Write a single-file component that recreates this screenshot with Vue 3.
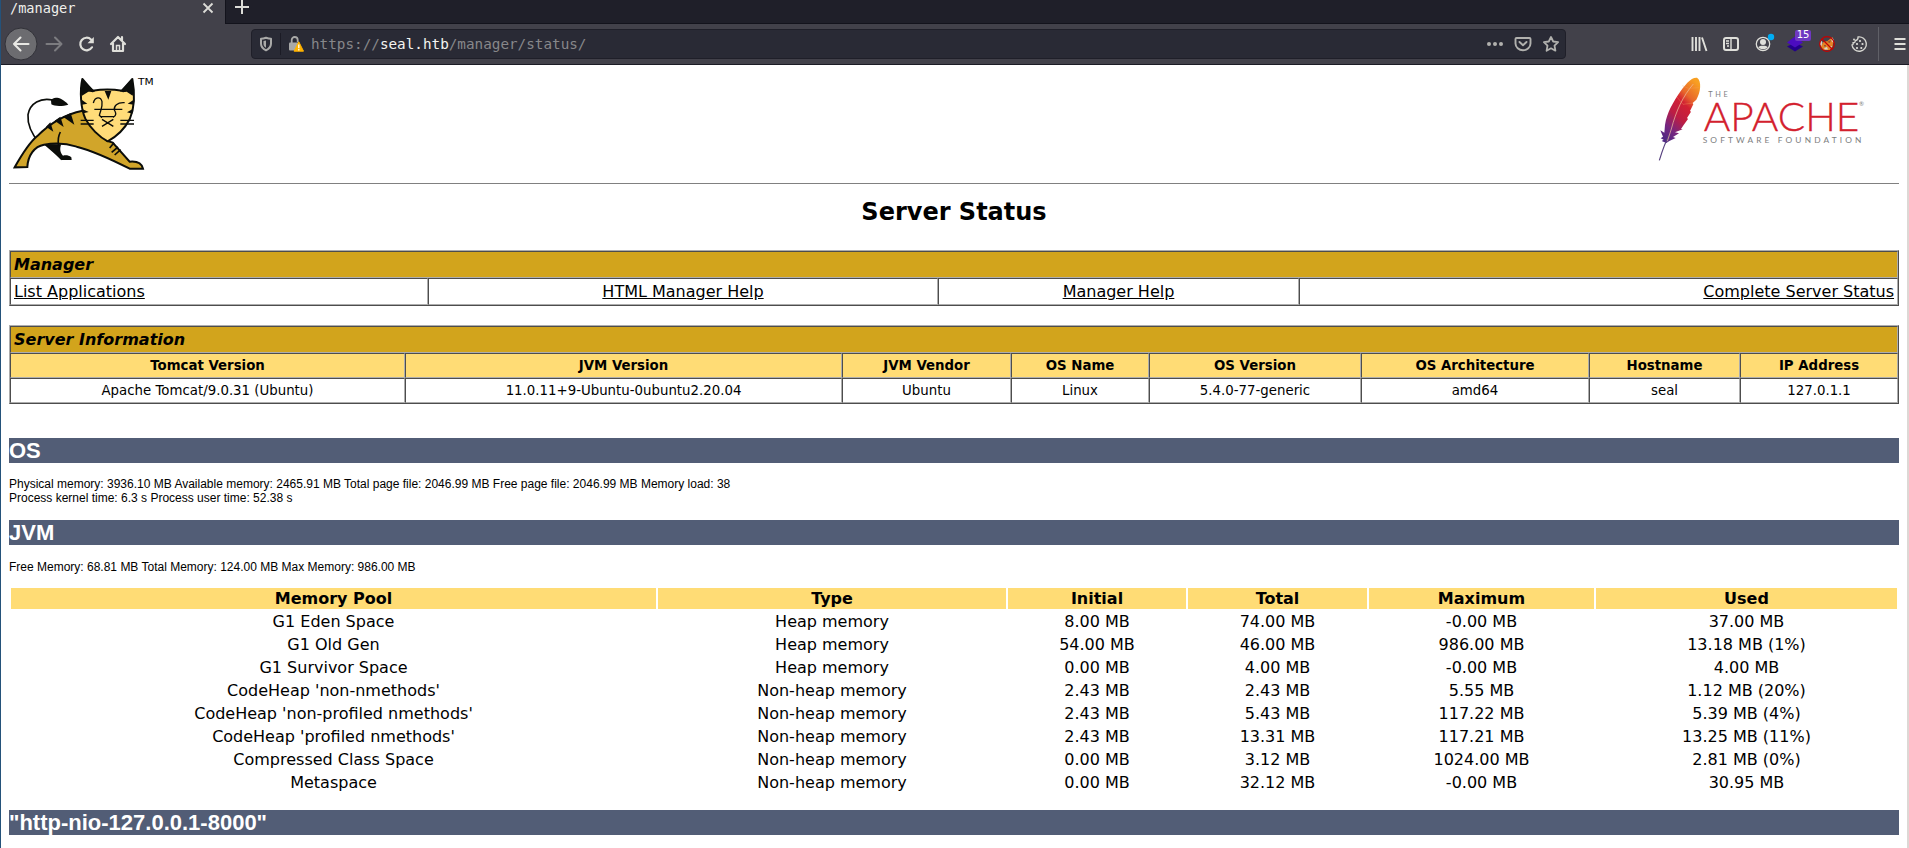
<script setup>
const info = [
  ['Tomcat Version', 'Apache Tomcat/9.0.31 (Ubuntu)'],
  ['JVM Version', '11.0.11+9-Ubuntu-0ubuntu2.20.04'],
  ['JVM Vendor', 'Ubuntu'],
  ['OS Name', 'Linux'],
  ['OS Version', '5.4.0-77-generic'],
  ['OS Architecture', 'amd64'],
  ['Hostname', 'seal'],
  ['IP Address', '127.0.1.1'],
]
const poolHeads = ['Memory Pool', 'Type', 'Initial', 'Total', 'Maximum', 'Used']
const pools = [
  ['G1 Eden Space', 'Heap memory', '8.00 MB', '74.00 MB', '-0.00 MB', '37.00 MB'],
  ['G1 Old Gen', 'Heap memory', '54.00 MB', '46.00 MB', '986.00 MB', '13.18 MB (1%)'],
  ['G1 Survivor Space', 'Heap memory', '0.00 MB', '4.00 MB', '-0.00 MB', '4.00 MB'],
  ["CodeHeap 'non-nmethods'", 'Non-heap memory', '2.43 MB', '2.43 MB', '5.55 MB', '1.12 MB (20%)'],
  ["CodeHeap 'non-profiled nmethods'", 'Non-heap memory', '2.43 MB', '5.43 MB', '117.22 MB', '5.39 MB (4%)'],
  ["CodeHeap 'profiled nmethods'", 'Non-heap memory', '2.43 MB', '13.31 MB', '117.21 MB', '13.25 MB (11%)'],
  ['Compressed Class Space', 'Non-heap memory', '0.00 MB', '3.12 MB', '1024.00 MB', '2.81 MB (0%)'],
  ['Metaspace', 'Non-heap memory', '0.00 MB', '32.12 MB', '-0.00 MB', '30.95 MB'],
]
</script>

<template>
  <div class="window">
    <div class="tabs">
      <div class="tab">
        <span class="tab-title">/manager</span>
        <svg class="close" width="12" height="12" viewBox="0 0 12 12"><path d="M1.5 1.5l9 9m0-9l-9 9" stroke="#dcdcd8" stroke-width="1.8" fill="none" /></svg>
      </div>
      <svg class="plus" width="16" height="16" viewBox="0 0 16 16"><path d="M8 1v14M1 8h14" stroke="#dcdcd8" stroke-width="2" fill="none" /></svg>
    </div>
    <div class="toolbar">
      <div class="nav">
        <svg width="34" height="34" viewBox="0 0 34 34"><circle cx="17" cy="17" r="16" fill="#6c6c70" stroke="#313138" /><path d="M24.500 17H10M16.500 10.500L10 17l6.500 6.500" stroke="#e8e8e4" stroke-width="2.100" fill="none" stroke-linecap="round" stroke-linejoin="round" /></svg>
        <svg width="32" height="34" viewBox="0 0 32 34"><path d="M8.500 17H23M17 10.500l6.500 6.500-6.500 6.500" stroke="#7c7c80" stroke-width="2" fill="none" stroke-linecap="round" stroke-linejoin="round" /></svg>
        <svg width="32" height="34" viewBox="0 0 32 34"><path d="M22 20.300A6.300 6.300 0 1 1 21 12.500" stroke="#dfdfda" stroke-width="2.200" fill="none" stroke-linecap="round" /><path d="M23.800 10v6.300h-6.300z" fill="#dfdfda" /></svg>
        <svg width="32" height="34" viewBox="0 0 32 34"><path d="M9 17l7-7 7 7M11 16v8h10v-8M20 10v4" stroke="#dfdfda" stroke-width="2.200" fill="none" stroke-linecap="round" stroke-linejoin="round" /><path d="M14.500 24v-5.500h3V24" fill="none" stroke="#dfdfda" stroke-width="1.500" /></svg>
      </div>
      <div class="urlbar">
        <svg class="shield" width="14" height="16" viewBox="0 0 14 16"><path d="M7 1.700c2 .7 3.500 1 5 1v5.100c0 3-2 5-5 6.500-3-1.500-5-3.500-5-6.500V2.700c1.500 0 3-.3 5-1z" fill="none" stroke="#a9a9a8" stroke-width="2" stroke-linejoin="round" /><path d="M7 4.500v7.200c-1.800-1-2.500-2.200-2.500-4V5z" fill="#a9a9a8" /></svg>
        <span class="url-sep"></span>
        <svg class="lock" width="16" height="16" viewBox="0 0 16 16"><path d="M3.700 7V4a3 3 0 0 1 6 0V6" stroke="#a9a9a8" stroke-width="1.800" fill="none" /><rect x="1" y="6.500" width="10.500" height="8" rx="1" fill="#a9a9a8" /><path d="M10.800 5.800l4.700 9.400H6.100z" fill="#ffb300" stroke="#ffb300" stroke-width="1" stroke-linejoin="round" /><path d="M10.800 8.600v3.600M10.800 13.100v1.300" stroke="#fff" stroke-width="1.300" /></svg>
        <span class="url">https://<b>seal.htb</b>/manager/status/</span>
        <div class="url-actions">
          <svg width="28" height="20" viewBox="0 0 28 20"><g fill="#b1b1ae"><circle cx="8" cy="10" r="2" /><circle cx="14" cy="10" r="2" /><circle cx="20" cy="10" r="2" /></g></svg>
          <svg width="28" height="20" viewBox="0 0 28 20"><path d="M7.500 4h13a1 1 0 0 1 1 1v4.500a7.500 6.800 0 0 1-15 0V5a1 1 0 0 1 1-1z" fill="none" stroke="#b1b1ae" stroke-width="1.900" /><path d="M10.500 8l3.500 3.300L17.500 8" fill="none" stroke="#b1b1ae" stroke-width="1.900" stroke-linecap="round" stroke-linejoin="round" /></svg>
          <svg width="28" height="20" viewBox="0 0 28 20"><path d="M14 3l2.200 4.500 4.900.7-3.600 3.500.9 5L14 14.300l-4.400 2.400.9-5L6.900 8.200l4.900-.7z" fill="none" stroke="#b1b1ae" stroke-width="1.800" stroke-linejoin="round" /></svg>
        </div>
      </div>
      <div class="extensions">
        <svg width="32" height="20" viewBox="0 0 32 20"><path d="M9.500 3v14M13 3v14M16.500 3v14M19 3.500l4.500 13.500" stroke="#dfdfda" stroke-width="1.900" fill="none" /></svg>
        <svg width="32" height="20" viewBox="0 0 32 20"><rect x="9" y="4" width="14" height="12" rx="2" fill="none" stroke="#dfdfda" stroke-width="2" /><path d="M16 4v12M11 7h3M11 9.500h3M12 12h2" stroke="#dfdfda" stroke-width="1.400" /></svg>
        <svg width="32" height="24" viewBox="0 0 32 24"><circle cx="16" cy="12" r="6.700" fill="none" stroke="#dfdfda" stroke-width="1.300" /><circle cx="16" cy="10" r="3" fill="#dfdfda" /><path d="M11.300 15.300c1-1.300 2.500-1.500 4.700-1.500s3.700.2 4.700 1.500c-2.300 2.700-7 2.700-9.400 0z" fill="#dfdfda" /><circle cx="24" cy="5" r="3.200" fill="#00adf4" /></svg>
        <div class="layers">
          <svg width="32" height="24" viewBox="0 0 32 24"><path d="M8 14.500l8-4 8 4-8 5z" fill="#24008b" /><path d="M8 10.500l8-6 8 6-8 5z" fill="#4b0cc0" /></svg>
          <span class="badge">15</span>
        </div>
        <svg width="32" height="20" viewBox="0 0 32 20"><path d="M9.500 12l3-4 4-1 5-4 .8 5-.8 5-3 3h-6z" fill="#e78325" /><path d="M9 6l2.500 2-1 4-1.500-1zM21 4l1.500 1v4l-2-2zM13 14l3-1 1 2.500h-3zM19 12l2 0-1 2z" fill="#d8d3cb" /><path d="M16 8l4-2-1 3zM13 11h2v1.500h-2z" fill="#8f5638" /><circle cx="16" cy="10" r="7.300" fill="none" stroke="#c40000" stroke-width="1.200" /><path d="M11 5l10.500 10.500" stroke="#c40000" stroke-width="1.200" /></svg>
        <svg width="32" height="20" viewBox="0 0 32 20"><path d="M15 3A7.200 7.200 0 1 1 9 11c1-.3 1.500-1 1-2.300 1.600.2 2.500-.7 2.200-2.200C14 6.500 15.300 5 15 3z" fill="none" stroke="#d5d5d0" stroke-width="1.400" stroke-linejoin="round" /><circle cx="11" cy="5.500" r="1" fill="#d5d5d0" /><g fill="#dfdfda"><circle cx="17" cy="7" r="1.100" /><circle cx="14" cy="10" r="1.100" /><circle cx="19.500" cy="10" r="1.100" /><circle cx="14" cy="14" r="1.100" /><circle cx="18.300" cy="14" r="1.100" /></g></svg>
      </div>
      <span class="menu-sep"></span>
      <svg class="menu" width="14" height="14" viewBox="0 0 14 14"><path d="M1.500 2h11M1.500 7h11M1.500 12h11" stroke="#dfdfda" stroke-width="2" /></svg>
    </div>

    <div class="page">
      <div class="logos">
        <svg class="tomcat" width="150" height="105" viewBox="27 29 450 315">
          <path d="M107 229L139 249L186 298" fill="none" stroke="#0b0d0a" stroke-width="6" />
          <path d="M119 250C93 219 82 188 84 163C90 128 122 111 158 119" fill="none" stroke="#0b0d0a" stroke-width="5" />
          <path d="M153 120C160 109 181 108 205 133C190 138 164 139 154 132z" fill="#0b0d0a" />
          <path d="M44 321C66 282 86 249 111 228C148 190 190 163 248 151L322 242L338 247L389 304C410 302 425 308 429 325H389C338 299 288 274 230 259C199 249 164 247 132 253C103 258 84 285 82 320z" fill="#d1a52a" stroke="#0b0d0a" stroke-width="6" stroke-linejoin="miter" />
          <path d="M130 251L186 299H215L214 291C206 285 198 284 189 286C181 278 178 265 184 252z" fill="#0b0d0a" />
          <path d="M181 215C174 229 173 241 176 254" fill="none" stroke="#0b0d0a" stroke-width="5" />
          <path d="M138 199L160 214L151 186zM164 181L191 200L181 169zM189 169L223 193L212 158z" fill="#0b0d0a" />
          <path d="M342 247L329 263M354 260L335 276M362 268L344 284" stroke="#0b0d0a" stroke-width="5" />
          <path d="M247 56L277 91Q323 84 366 91L397 56C405 99 403 145 389 177C371 211 346 231 323 243C298 230 270 203 256 175C242 145 239 91 247 56z" fill="#ffdc79" stroke="#0b0d0a" stroke-width="6" stroke-linejoin="round" />
          <path d="M247 56L285 93C277 97 283 95 265 94L246 106C238 95 243 79 247 56zM397 56L360 93C372 97 366 95 380 94L398 106C403 92 402 76 397 56zM314 92H334L325 118zM246 119L262 130L245 133zM399 120L383 130L401 133zM248 147L266 155L250 159zM398 146L381 156L397 160z" fill="#0b0d0a" />
          <path d="M280 128C285 109 302 108 306 124C308 143 302 148 298 165L306 172M283 147H367M374 127C351 125 341 138 343 149C348 157 351 165 339 171M302 169H340M306 177L340 198M340 177L306 198M242 180H281M242 191H281M361 180H402M361 191H402" fill="none" stroke="#0b0d0a" stroke-width="4" />
          <text x="414" y="75" font-size="27" textLength="47" lengthAdjust="spacingAndGlyphs">TM</text>
        </svg>
        <svg class="apache" width="220" height="90" viewBox="60 45 660 270">
          <defs><linearGradient id="feather" x1=".8" y1="0" x2=".2" y2="1"><stop offset="0" stop-color="#f8a022" /><stop offset=".25" stop-color="#e8672b" /><stop offset=".38" stop-color="#d22033" /><stop offset=".6" stop-color="#bd1d43" /><stop offset=".82" stop-color="#762780" /><stop offset="1" stop-color="#502784" /></linearGradient></defs>
          <path d="M201 53C216 63 212 97 199 119L188 129L190 133L180 153L183 155L171 174L174 177L161 195L153 207L158 208L135 217L147 220L129 231L137 234L118 243L109 249L95 243L101 239L92 235L99 230L91 211L103 218L104 207C105 172 123 137 144 105C164 75 183 51 201 53z" fill="url(#feather)" />
          <path d="M118 225C104 249 95 278 88 301" fill="none" stroke="#57417f" stroke-width="3.500" />
          <path d="M190 72C159 108 138 153 124 207L112 244" fill="none" stroke="#eebc9e" stroke-width="2.200" />
          <path d="M157 77L175 85L208 83M141 111L159 133L189 129" fill="none" stroke="#f3a15c" stroke-width="1" />
          <text x="235" y="110" class="small-word" font-size="22" textLength="58">THE</text>
          <text x="221" y="213" class="apache-word" font-size="120" textLength="467" lengthAdjust="spacingAndGlyphs">APACHE</text>
          <text x="218" y="249" class="small-word" font-size="25" textLength="476">SOFTWARE FOUNDATION</text>
          <text x="687" y="138" class="small-word" font-size="18">®</text>
        </svg>
      </div>
      <div class="rule"></div>
      <h2>Server Status</h2>

      <table class="boxed links">
        <colgroup><col class="l1" /><col class="l2" /><col class="l3" /><col class="l4" /></colgroup>
        <tbody>
          <tr><td colspan="4" class="title">Manager</td></tr>
          <tr><td class="left"><a>List Applications</a></td><td><a>HTML Manager Help</a></td><td><a>Manager Help</a></td><td class="right"><a>Complete Server Status</a></td></tr>
        </tbody>
      </table>

      <table class="boxed info">
        <colgroup><col v-for="n in 8" :key="n" :class="'i' + n" /></colgroup>
        <tbody>
          <tr><td colspan="8" class="title">Server Information</td></tr>
          <tr class="small"><th v-for="c in info" :key="c[0]">{{ c[0] }}</th></tr>
          <tr class="small"><td v-for="c in info" :key="c[0]">{{ c[1] }}</td></tr>
        </tbody>
      </table>

      <h1 class="first">OS</h1>
      <p>Physical memory: 3936.10 MB Available memory: 2465.91 MB Total page file: 2046.99 MB Free page file: 2046.99 MB Memory load: 38<br />Process kernel time: 6.3 s Process user time: 52.38 s</p>
      <h1>JVM</h1>
      <p class="jvm">Free Memory: 68.81 MB Total Memory: 124.00 MB Max Memory: 986.00 MB</p>

      <table class="pools">
        <colgroup><col v-for="n in 6" :key="n" :class="'p' + n" /></colgroup>
        <tbody>
          <tr><th v-for="h in poolHeads" :key="h">{{ h }}</th></tr>
          <tr v-for="r in pools" :key="r[0]"><td v-for="(v, i) in r" :key="i">{{ v }}</td></tr>
        </tbody>
      </table>
      <h1 class="connector">"http-nio-127.0.0.1-8000"</h1>
    </div>
  </div>
</template>

<style>
body { margin: 0; background: #fff; }
</style>

<style scoped>
* { box-sizing: border-box; }
.window { width: 1909px; height: 848px; overflow: hidden; border-left: 1px solid #24527a; background: #fff; color: #000; font-family: "DejaVu Sans", sans-serif; font-size: 16px; }
svg { display: block; flex: none; }
.tabs { height: 24px; background: #1f1f29; display: flex; border-bottom: 1px solid #13131c; }
.tab { width: 225px; height: 24px; background: #42414a; border-right: 1px solid #13131c; display: flex; }
.tab-title { font: 13.600px/16px "DejaVu Sans Mono", monospace; color: #f0f0ec; margin-left: 9px; width: 192px; }
.close { margin: 2px 0 0 0; }
.plus { margin: -1px 0 0 8px; }
.toolbar { height: 41px; background: #42414a; border-bottom: 1px solid #1b1b25; display: flex; align-items: center; }
.nav { display: flex; width: 250px; padding-left: 3px; }
.urlbar { width: 1315px; height: 30px; background: #292a35; border: 1px solid #1f1f29; border-radius: 4px; display: flex; align-items: center; }
.shield { margin-left: 7px; }
.url-sep { width: 1px; height: 22px; background: #1b1b25; margin: 0 7px; }
.lock { margin-left: 0; }
.url { font: 14.300px/20px "DejaVu Sans Mono", monospace; color: #87878a; margin-left: 7px; flex: 1; }
.url b { font-weight: 400; color: #f4f4f0; }
.url-actions { display: flex; }
.extensions { display: flex; align-items: center; margin-left: 117px; }
.layers { position: relative; }
.badge { position: absolute; left: 16px; top: -2px; width: 16px; height: 11px; border-radius: 2px; background: #6f38c2; color: #fff; font: 10px/10px "DejaVu Sans", sans-serif; text-align: center; }
.menu-sep { width: 1px; height: 34px; background: #606067; margin-left: 3px; }
.menu { margin-left: 14px; }
.page { height: 783px; padding: 5px 8px 0 8px; border-right: 2px solid #ddd8d5; }
.logos { height: 113px; display: flex; justify-content: space-between; }
.apache { margin: 5px 29px 0 0; }
.rule { height: 1px; background: #808080; }
h2 { margin: 13px 0 0; height: 53px; font-size: 24px; line-height: 30px; text-align: center; }
table { table-layout: fixed; width: 1890px; text-align: center; line-height: 19px; }
td, th { padding: 0; white-space: nowrap; }
.boxed { border: 1px solid; border-color: #adadad #4d4d4d #4d4d4d #adadad; border-spacing: 0; }
.boxed td, .boxed th { height: 27px; border: 1px solid; border-color: #4d4d4d #adadad #adadad #4d4d4d; padding: 0 3px; }
.boxed .title { background: #d2a41c; text-align: left; font-weight: 700; font-style: italic; }
.boxed .left { text-align: left; }
.boxed .right { text-align: right; }
.boxed a { text-decoration: underline; }
.boxed .small td, .boxed .small th { height: 25px; font-size: 13.333px; }
.boxed th, .pools th { background: #ffdc75; }
.info { margin-top: 19px; }
.l1 { width: 418px } .l2 { width: 510px } .l3 { width: 361px } .l4 { width: 599px }
.i1 { width: 395px } .i2 { width: 437px } .i3 { width: 169px } .i4 { width: 138px } .i5 { width: 212px } .i6 { width: 228px } .i7 { width: 151px } .i8 { width: 158px }
h1 { margin: 0; height: 25px; background: #525d76; color: #fff; font: 700 22px/25px "Liberation Sans", Arial, sans-serif; }
.first { margin-top: 34px; }
p { margin: 0; height: 57px; padding-top: 14px; font: 12px/14px "Liberation Sans", Arial, sans-serif; }
.jvm { height: 41px; padding-top: 15px; }
.pools { border-spacing: 2px; }
.pools td, .pools th { height: 21px; }
.p1 { width: 645px } .p2 { width: 348px } .p3 { width: 178px } .p4 { width: 179px } .p5 { width: 225px } .p6 { width: 301px }
.connector { margin-top: 15px; }
.apache-word { font-family: Lato, sans-serif; font-weight: 300; fill: #d3202d; stroke: #d3202d; stroke-width: 1; }
.small-word { font-family: Lato, sans-serif; fill: #7d7e80; }
</style>
